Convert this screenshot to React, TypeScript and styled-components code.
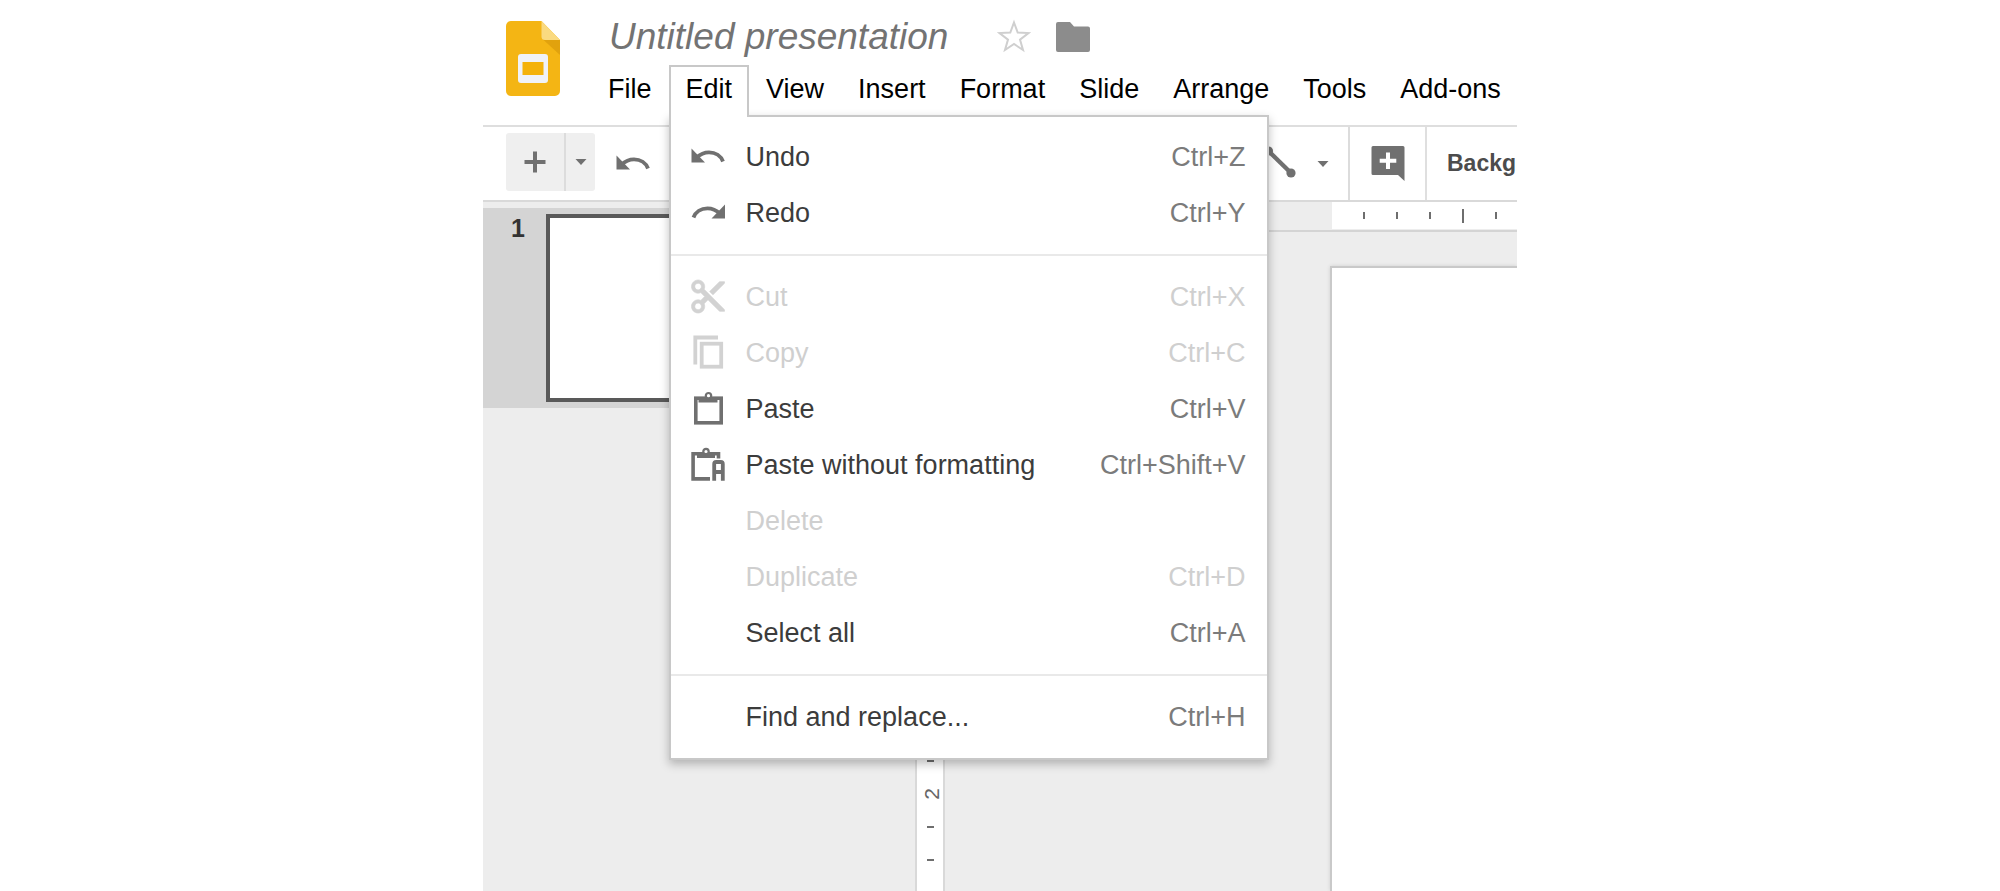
import React from "react";
import styled, { createGlobalStyle } from "styled-components";

const GlobalStyle = createGlobalStyle`
  * { box-sizing: border-box; }
  body {
    margin: 0;
    background: #fff;
    font-family: "Liberation Sans", Arial, sans-serif;
  }
  button {
    margin: 0;
    padding: 0;
    border: 0;
    background: none;
    font: inherit;
    color: inherit;
    cursor: pointer;
  }
  svg { display: block; flex: none; overflow: visible; }
`;

const AppFrame = styled.div`
  display: flex;
  flex-direction: column;
  width: 100%;
  max-width: 1034px;
  height: 100vh;
  margin: 0 auto;
  overflow: hidden;
`;

const Header = styled.header`
  display: flex;
  flex: none;
  gap: 31px;
  padding: 0 0 10px 23px;
  border-bottom: 2px solid #dedede;
`;

const LogoLink = styled.a`
  padding-top: 21px;
`;

const HeaderMain = styled.div`
  flex: 1;
  min-width: 0;
`;

const TitleRow = styled.div`
  display: flex;
  align-items: center;
  height: 65px;
  padding: 9px 0 0 18px;
`;

const Title = styled.h1`
  margin: 0 48px 0 0;
  color: #737373;
  font-size: 37px;
  font-style: italic;
  font-weight: 400;
  line-height: 48px;
  white-space: nowrap;
`;

const TitleActions = styled.div`
  display: flex;
  align-items: center;
  gap: 24px;
`;

const MenuBar = styled.nav`
  display: flex;
  height: 50px;
`;

const MenuTabWrap = styled.div`
  position: relative;
  flex: none;
`;

const MenuTab = styled.button<{ $open?: boolean }>`
  position: relative;
  z-index: ${(p) => (p.$open ? 3 : 0)};
  height: 52px;
  padding: 0 15px 5px;
  border: 2px solid ${(p) => (p.$open ? "#c8c8c8" : "transparent")};
  border-bottom: 0;
  background: ${(p) => (p.$open ? "#fff" : "transparent")};
  color: #000;
  font-size: 27px;
  white-space: nowrap;
`;

const Menu = styled.div`
  position: absolute;
  z-index: 2;
  top: 50px;
  left: 0;
  width: 600px;
  padding: 12px 0 13px;
  border: 2px solid #c8c8c8;
  background: #fff;
  box-shadow: 0 4px 9px rgba(0, 0, 0, 0.25);
`;

const MenuRow = styled.button`
  display: flex;
  align-items: center;
  width: 100%;
  height: 56px;
  padding: 0 21px 0 19px;
  color: #3c3c3c;
  font-size: 27px;
  text-align: left;
  white-space: nowrap;

  &:disabled {
    color: #cfcfcf;
    cursor: default;
  }
`;

const IconSlot = styled.span`
  flex: none;
  width: 36px;
  height: 36px;
  margin-right: 20px;
  color: #707070;

  ${MenuRow}:disabled & {
    color: #d2d2d2;
  }
`;

const RowLabel = styled.span`
  flex: 1;
`;

const Shortcut = styled.span`
  color: #7b7b7b;

  ${MenuRow}:disabled & {
    color: #cfcfcf;
  }
`;

const Separator = styled.hr`
  height: 2px;
  margin: 13px 0;
  border: 0;
  background: #e9e9e9;
`;

const Toolbar = styled.div`
  display: flex;
  flex: none;
  align-items: stretch;
  height: 75px;
  padding-left: 23px;
  border-bottom: 2px solid #d9d9d9;
  color: #707070;
`;

const SplitButton = styled.div`
  display: flex;
  align-self: center;
  height: 58px;
  margin: 0 20px 3px 0;
  border-radius: 3px;
  background: #efefef;
`;

const ToolButton = styled.button<{ $width: number; $divider?: boolean }>`
  display: flex;
  flex: none;
  align-items: center;
  justify-content: center;
  width: ${(p) => p.$width}px;
  border-left: ${(p) => (p.$divider ? "2px solid #dcdcdc" : "0")};
`;

const ToolSpacer = styled.div`
  flex: 1;
`;

const BackgroundButton = styled.button`
  flex: none;
  width: 92px;
  padding-left: 20px;
  border-left: 2px solid #dfdfdf;
  overflow: hidden;
  color: #4c4c4c;
  font-size: 23px;
  font-weight: 700;
  text-align: left;
  white-space: nowrap;
`;

const Workspace = styled.main`
  display: flex;
  flex: 1;
  min-height: 0;
  background: #ededed;
`;

const Filmstrip = styled.aside`
  flex: none;
  width: 432px;
  padding-top: 6px;
`;

const SlideItem = styled.div`
  display: flex;
  height: 200px;
  padding: 6px 30px 6px 28px;
  background: #d4d4d4;
`;

const SlideNumber = styled.span`
  width: 35px;
  color: #333;
  font-size: 25px;
  font-weight: 700;
  line-height: 28px;
`;

const Thumbnail = styled.div`
  flex: 1;
  border: 4px solid #595959;
  background: #fff;
`;

const Editor = styled.section`
  display: flex;
  flex: 1;
  flex-direction: column;
  min-width: 0;
`;

const TopRuler = styled.div`
  flex: none;
  height: 30px;
  padding-left: 417px;
  border-bottom: 2px solid #d4d4d4;
`;

const TopScale = styled.div`
  display: flex;
  height: 27px;
  overflow: hidden;
  background: #fff;
`;

const TopCell = styled.div`
  display: flex;
  flex: none;
  align-items: center;
  justify-content: flex-end;
  width: 33px;
`;

const TickMark = styled.span<{ $long?: boolean; $vertical?: boolean }>`
  width: ${(p) => (p.$vertical ? (p.$long ? 14 : 7) : 2)}px;
  height: ${(p) => (p.$vertical ? 2 : p.$long ? 14 : 7)}px;
  background: #6e6e6e;
`;

const EditorBody = styled.div`
  display: flex;
  flex: 1;
  min-height: 0;
`;

const SideRuler = styled.div`
  flex: none;
  width: 30px;
  padding-top: 17px;
  border: solid #d9d9d9;
  border-width: 0 2px;
  overflow: hidden;
  background: #fff;
`;

const SideCell = styled.div`
  display: flex;
  align-items: center;
  justify-content: center;
  height: 33px;
`;

const RulerLabel = styled.span`
  padding-top: 4px;
  color: #666;
  font-size: 21px;
  line-height: 24px;
  transform: rotate(-90deg);
`;

const Canvas = styled.div`
  display: flex;
  flex: 1;
  padding: 34px 0 0 385px;
`;

const Slide = styled.div`
  flex: 1;
  border: solid #c9c9c9;
  border-width: 2px 0 0 2px;
  background: #fff;
  box-shadow: 0 0 4px rgba(0, 0, 0, 0.12);
`;

const Logo = () => (
  <svg width="54" height="75" viewBox="0 0 54 75">
    <path d="M5 0H35.500L54 19V70a5 5 0 0 1-5 5H5a5 5 0 0 1-5-5V5a5 5 0 0 1 5-5z" fill="#f4b514" />
    <path d="M37 18.500L54 19V34z" fill="#d99a0b" opacity="0.7" />
    <path d="M35.500 0L54 19H39a3.500 3.500 0 0 1-3.500-3.500z" fill="#fada80" />
    <rect x="12" y="33" width="30" height="29" rx="3" fill="#f0f2f7" />
    <rect x="16.500" y="41" width="21" height="13" fill="#f4b20a" />
  </svg>
);

const StarIcon = () => (
  <svg width="36" height="36" viewBox="0 0 36 36">
    <path
      d="M18 3.500L21.700 13.500L32.500 14L24 20.600L27 31L18 25L9 31L12 20.600L3.500 14L14.300 13.500Z"
      fill="none"
      stroke="#cfcfcf"
      strokeWidth="2"
    />
  </svg>
);

const FolderIcon = () => (
  <svg width="34" height="30" viewBox="0 0 34 30">
    <path d="M2 0H14L18 4.500H32a2 2 0 0 1 2 2V28a2 2 0 0 1-2 2H2a2 2 0 0 1-2-2V2a2 2 0 0 1 2-2z" fill="#8c8c8c" />
  </svg>
);

const UndoIcon = () => (
  <svg width="36" height="36" viewBox="0 0 36 36" fill="currentColor">
    <path d="M1.500 9.500L15 23.500H1.500z" />
    <path
      d="M6.500 18.500C10.500 14.800 14.500 13.300 19 13.300C25.500 13.300 31 17 33 22.500"
      fill="none"
      stroke="currentColor"
      strokeWidth="3.800"
    />
  </svg>
);

const RedoIcon = () => (
  <svg width="36" height="36" viewBox="0 0 36 36" fill="currentColor">
    <g transform="translate(36.500 0) scale(-1 1)">
      <path d="M1.500 9.500L15 23.500H1.500z" />
      <path
        d="M6.500 18.500C10.500 14.800 14.500 13.300 19 13.300C25.500 13.300 31 17 33 22.500"
        fill="none"
        stroke="currentColor"
        strokeWidth="3.800"
      />
    </g>
  </svg>
);

const CutIcon = () => (
  <svg width="36" height="36" viewBox="0 0 36 36" fill="currentColor">
    <path
      transform="translate(-1.800 -2.300) scale(1.650)"
      stroke="currentColor"
      strokeWidth="0.400"
      d="M9.640 7.640c.230-.500.360-1.050.360-1.640 0-2.210-1.790-4-4-4S2 3.790 2 6s1.790 4 4 4c.590 0 1.140-.130 1.640-.360L10 12l-2.360 2.360C7.140 14.130 6.590 14 6 14c-2.210 0-4 1.790-4 4s1.790 4 4 4 4-1.790 4-4c0-.590-.130-1.140-.360-1.640L12 14l7 7h3v-1L9.640 7.640zM6 8c-1.100 0-2-.890-2-2s.900-2 2-2 2 .890 2 2-.900 2-2 2zm0 12c-1.100 0-2-.890-2-2s.900-2 2-2 2 .890 2 2-.900 2-2 2zM19 3l-6 6 2 2 7-7V3z"
    />
  </svg>
);

const CopyIcon = () => (
  <svg width="36" height="36" viewBox="0 0 36 36" fill="none" stroke="currentColor" strokeWidth="3.800">
    <path d="M28 2.500H5.300V29.500" />
    <rect x="11.700" y="8.700" width="19.500" height="23" />
  </svg>
);

const PasteIcon = () => (
  <svg width="36" height="36" viewBox="0 0 36 36" fill="none" stroke="currentColor">
    <rect x="5.800" y="7.200" width="25.400" height="24.600" strokeWidth="3.600" />
    <path d="M8.500 9.500H27.500" strokeWidth="4" />
    <circle cx="18.500" cy="4.700" r="2.700" strokeWidth="2.200" fill="#fff" />
  </svg>
);

const PastePlainIcon = () => (
  <svg width="36" height="36" viewBox="0 0 36 36" fill="none" stroke="currentColor">
    <path d="M20 31.900H3.100V6.700H28.500V11.500" strokeWidth="3.600" />
    <path d="M7 9H25" strokeWidth="4" />
    <circle cx="16" cy="4.500" r="2.700" strokeWidth="2.200" fill="#fff" />
    <path d="M24.200 33.700V17a2 2 0 0 1 2-2H30.800a2 2 0 0 1 2 2V33.700M24.200 25H32.800" strokeWidth="3.800" />
  </svg>
);

const PlusIcon = () => (
  <svg width="22" height="22" viewBox="0 0 22 22" fill="currentColor">
    <path d="M9 0.500h4V9h8.500v4H13v8.500H9V13H0.500V9H9z" />
  </svg>
);

const CaretIcon = () => (
  <svg width="12" height="6" viewBox="0 0 12 6" fill="currentColor">
    <path d="M0.500 0h11L6 6z" />
  </svg>
);

const LineIcon = () => (
  <svg width="34" height="34" viewBox="0 0 34 34" fill="currentColor">
    <circle cx="8.500" cy="4" r="4.600" />
    <circle cx="31" cy="26" r="4.600" />
    <path d="M8.500 4L31 26" stroke="currentColor" strokeWidth="4.400" />
  </svg>
);

const CommentIcon = () => (
  <svg width="34" height="36" viewBox="0 0 34 36" fill="currentColor">
    <path d="M2 0H32a1.500 1.500 0 0 1 1.500 1.500V35L27 29H2a1.500 1.500 0 0 1-1.500-1.500V1.500A1.500 1.500 0 0 1 2 0z" />
    <path d="M17 6.500V23M8.700 14.700H25.300" stroke="#fff" strokeWidth="4" />
  </svg>
);

type Command = {
  label: string;
  keys?: string;
  icon?: React.ReactNode;
  disabled?: boolean;
};

const editCommands: Command[][] = [
  [
    { label: "Undo", keys: "Ctrl+Z", icon: <UndoIcon /> },
    { label: "Redo", keys: "Ctrl+Y", icon: <RedoIcon /> },
  ],
  [
    { label: "Cut", keys: "Ctrl+X", icon: <CutIcon />, disabled: true },
    { label: "Copy", keys: "Ctrl+C", icon: <CopyIcon />, disabled: true },
    { label: "Paste", keys: "Ctrl+V", icon: <PasteIcon /> },
    { label: "Paste without formatting", keys: "Ctrl+Shift+V", icon: <PastePlainIcon /> },
    { label: "Delete", disabled: true },
    { label: "Duplicate", keys: "Ctrl+D", disabled: true },
    { label: "Select all", keys: "Ctrl+A" },
  ],
  [{ label: "Find and replace...", keys: "Ctrl+H" }],
];

const menuNames = ["File", "Edit", "View", "Insert", "Format", "Slide", "Arrange", "Tools", "Add-ons"];

const EditMenu = () => (
  <Menu role="menu" aria-label="Edit">
    {editCommands.map((group, index) => (
      <React.Fragment key={index}>
        {index > 0 && <Separator />}
        {group.map((command) => (
          <MenuRow key={command.label} role="menuitem" disabled={command.disabled}>
            <IconSlot>{command.icon}</IconSlot>
            <RowLabel>{command.label}</RowLabel>
            <Shortcut>{command.keys}</Shortcut>
          </MenuRow>
        ))}
      </React.Fragment>
    ))}
  </Menu>
);

export default function App() {
  return (
    <AppFrame>
      <GlobalStyle />
      <Header>
        <LogoLink href="#" aria-label="Slides home">
          <Logo />
        </LogoLink>
        <HeaderMain>
          <TitleRow>
            <Title>Untitled presentation</Title>
            <TitleActions>
              <button aria-label="Star">
                <StarIcon />
              </button>
              <button aria-label="Move to folder">
                <FolderIcon />
              </button>
            </TitleActions>
          </TitleRow>
          <MenuBar>
            {menuNames.map((name) => (
              <MenuTabWrap key={name}>
                <MenuTab $open={name === "Edit"} aria-expanded={name === "Edit"}>
                  {name}
                </MenuTab>
                {name === "Edit" && <EditMenu />}
              </MenuTabWrap>
            ))}
          </MenuBar>
        </HeaderMain>
      </Header>

      <Toolbar>
        <SplitButton>
          <ToolButton $width={58} aria-label="New slide">
            <PlusIcon />
          </ToolButton>
          <ToolButton $width={31} $divider aria-label="New slide with layout">
            <CaretIcon />
          </ToolButton>
        </SplitButton>
        <ToolButton $width={36} aria-label="Undo">
          <UndoIcon />
        </ToolButton>
        <ToolSpacer />
        <ToolButton $width={42} aria-label="Line">
          <LineIcon />
        </ToolButton>
        <ToolButton $width={50} aria-label="Line type">
          <CaretIcon />
        </ToolButton>
        <ToolButton $width={77} $divider aria-label="Add comment">
          <CommentIcon />
        </ToolButton>
        <BackgroundButton>Background...</BackgroundButton>
      </Toolbar>

      <Workspace>
        <Filmstrip>
          <SlideItem>
            <SlideNumber>1</SlideNumber>
            <Thumbnail />
          </SlideItem>
        </Filmstrip>
        <Editor>
          <TopRuler>
            <TopScale>
              {Array.from({ length: 12 }, (_, i) => (
                <TopCell key={i}>
                  <TickMark $long={i % 4 === 3} />
                </TopCell>
              ))}
            </TopScale>
          </TopRuler>
          <EditorBody>
            <SideRuler>
              {Array.from({ length: 24 }, (_, i) => (
                <SideCell key={i}>
                  {i > 0 && i % 8 === 0 ? (
                    <RulerLabel>{i / 8}</RulerLabel>
                  ) : (
                    <TickMark $vertical $long={i % 8 === 4} />
                  )}
                </SideCell>
              ))}
            </SideRuler>
            <Canvas>
              <Slide />
            </Canvas>
          </EditorBody>
        </Editor>
      </Workspace>
    </AppFrame>
  );
}
